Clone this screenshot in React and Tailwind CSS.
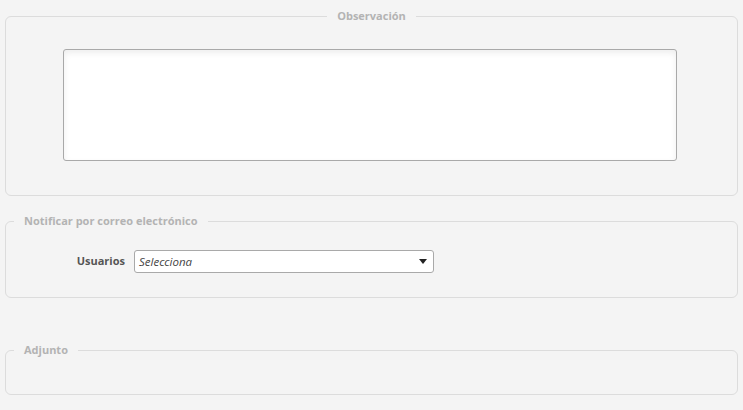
import React from 'react';

const font = { fontFamily: '"Open Sans", "Liberation Sans", sans-serif' };

const Legend = ({ children, center }) => (
  <legend
    className={`px-[10px] text-[11px] leading-[14px] font-bold text-[#b3b3b3] ${center ? 'mx-auto' : ''}`}
  >
    {children}
  </legend>
);

export default function App() {
  return (
    <div className="min-h-screen bg-[#f4f4f4] pt-[9px] pb-4" style={font}>
      {/* Observación */}
      <fieldset className="mx-[5px] border border-[#dcdcdc] rounded-[6px] px-[8px] pb-[34px]">
        <Legend center>Observación</Legend>
        <textarea
          className="block mt-[26px] ml-[49px] w-[614px] h-[112px] bg-white border border-[#a9a9a9] rounded-[3px] shadow-[inset_0_3px_6px_rgba(0,0,0,0.07)] resize-none outline-none"
        />
      </fieldset>

      {/* Notificar */}
      <fieldset className="mx-[5px] mt-[18px] border border-[#dcdcdc] rounded-[6px] px-[8px] pb-[24px]">
        <Legend>Notificar por correo electrónico</Legend>
        <div className="flex items-center mt-[22px]">
          <label className="w-[111px] text-right text-[11px] font-bold text-[#555]">Usuarios</label>
          <div className="ml-[9px] w-[300px] h-[23px] bg-white border border-[#a9a9a9] rounded-[3px] flex items-center justify-between pl-[4px] pr-[6px]">
            <span className="text-[11.5px] italic text-[#444]">Selecciona</span>
            <svg width="8" height="5" viewBox="0 0 8 5">
              <path d="M0 0 L8 0 L4 5 Z" fill="#222" />
            </svg>
          </div>
        </div>
      </fieldset>

      {/* Adjunto */}
      <fieldset className="mx-[5px] mt-[45px] border border-[#dcdcdc] rounded-[6px] px-[8px]">
        <Legend>Adjunto</Legend>
        <div className="h-[37px]" />
      </fieldset>
    </div>
  );
}
